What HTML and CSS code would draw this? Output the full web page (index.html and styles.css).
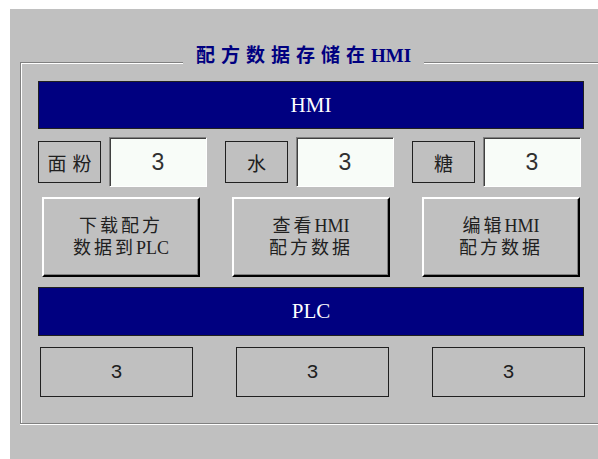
FILE: index.html
```html
<!DOCTYPE html>
<html lang="zh-CN">

<head>
    <meta charset="UTF-8">
    <meta name="viewport" content="width=device-width, initial-scale=1.0">
    <title>配方数据存储在HMI</title>
    <link rel="stylesheet" href="styles.css">
</head>

<body>
    <div class="panel">
        <div class="groupBox">
            <span class="groupTitle">配方数据存储在<span class="latin">HMI</span></span>

            <div class="bar">HMI</div>

            <div class="fieldRow">
                <div class="field">
                    <div class="fieldLabel">面粉</div>
                    <div class="fieldInput">3</div>
                </div>
                <div class="field">
                    <div class="fieldLabel">水</div>
                    <div class="fieldInput">3</div>
                </div>
                <div class="field">
                    <div class="fieldLabel">糖</div>
                    <div class="fieldInput">3</div>
                </div>
            </div>

            <div class="buttonRow">
                <button class="panelBtn">下载配方<br>数据到<span class="latin">PLC</span></button>
                <button class="panelBtn">查看<span class="latin">HMI</span><br>配方数据</button>
                <button class="panelBtn">编辑<span class="latin">HMI</span><br>配方数据</button>
            </div>

            <div class="bar plcBar">PLC</div>

            <div class="valueRow">
                <div class="valueBox">3</div>
                <div class="valueBox">3</div>
                <div class="valueBox">3</div>
            </div>
        </div>
    </div>
</body>

</html>
```

FILE: styles.css
```css
body {
    margin: 0;
    padding: 0;
    background-color: #fff;
    overflow: hidden;
    font-family: "Liberation Serif", "Noto Sans CJK SC", serif;
    color: #202020;
}

.panel {
    margin: 9px 0 0 10px;
    height: 450px;
    background-color: #c0c0c0;
    padding: 53px 0 0 10px;
    box-sizing: border-box;
    overflow: hidden;
}

/* etched group frame, runs off the right edge */
.groupBox {
    position: relative;
    width: 600px;
    padding: 18px 0 26px 17px;
    border-top: 1px solid #808080;
    border-left: 1px solid #808080;
    border-bottom: 1px solid #808080;
    box-shadow: inset 1px 1px 0 #fff, 0 1px 0 #fff;
}

.groupTitle {
    position: absolute;
    top: -17px;
    left: 162px;
    padding: 0 13px 0 13px;
    background-color: #c0c0c0;
    color: #000080;
    font-weight: bold;
    font-size: 19px;
    line-height: 20px;
    letter-spacing: 6px;
}

.latin {
    letter-spacing: 0;
}

.bar {
    width: 546px;
    height: 48px;
    box-sizing: border-box;
    border: 1px solid #202020;
    background-color: #000080;
    color: #fff;
    font-size: 21px;
    display: flex;
    align-items: center;
    justify-content: center;
}

.plcBar {
    height: 49px;
    margin-top: 10px;
}

.fieldRow {
    margin-top: 8px;
    display: grid;
    grid-template-columns: repeat(3, 169px);
    column-gap: 18px;
}

.field {
    display: flex;
    align-items: center;
    gap: 8px;
}

.fieldLabel {
    width: 63px;
    height: 42px;
    box-sizing: border-box;
    border: 1px solid #202020;
    display: flex;
    align-items: center;
    justify-content: center;
    padding-left: 6px;
    font-size: 19px;
    letter-spacing: 6px;
}

.fieldInput {
    width: 98px;
    height: 50px;
    box-sizing: border-box;
    border: 1px solid;
    border-color: #808080 #fff #fff #808080;
    box-shadow: inset 1px 1px 0 #404040;
    background-color: #f8fcf8;
    display: flex;
    align-items: center;
    justify-content: center;
    font-family: "Liberation Sans", sans-serif;
    font-size: 23px;
    color: #303030;
}

.buttonRow {
    margin: 10px 0 0 4px;
    display: grid;
    grid-template-columns: repeat(3, 158px);
    column-gap: 32px;
}

.panelBtn {
    height: 80px;
    padding: 0;
    border: 2px solid;
    border-color: #fff #000 #000 #fff;
    box-shadow: inset -1px -1px 0 #808080;
    background-color: #c0c0c0;
    color: #202020;
    font-family: "Liberation Serif", "Noto Sans CJK SC", serif;
    font-size: 18px;
    line-height: 22px;
    letter-spacing: 3px;
    outline: none;
}

.valueRow {
    margin: 11px 0 0 2px;
    display: grid;
    grid-template-columns: repeat(3, 153px);
    column-gap: 43px;
}

.valueBox {
    height: 50px;
    box-sizing: border-box;
    border: 1px solid #202020;
    display: flex;
    align-items: center;
    justify-content: center;
    font-family: "Liberation Mono", monospace;
    font-size: 20px;
}
```
